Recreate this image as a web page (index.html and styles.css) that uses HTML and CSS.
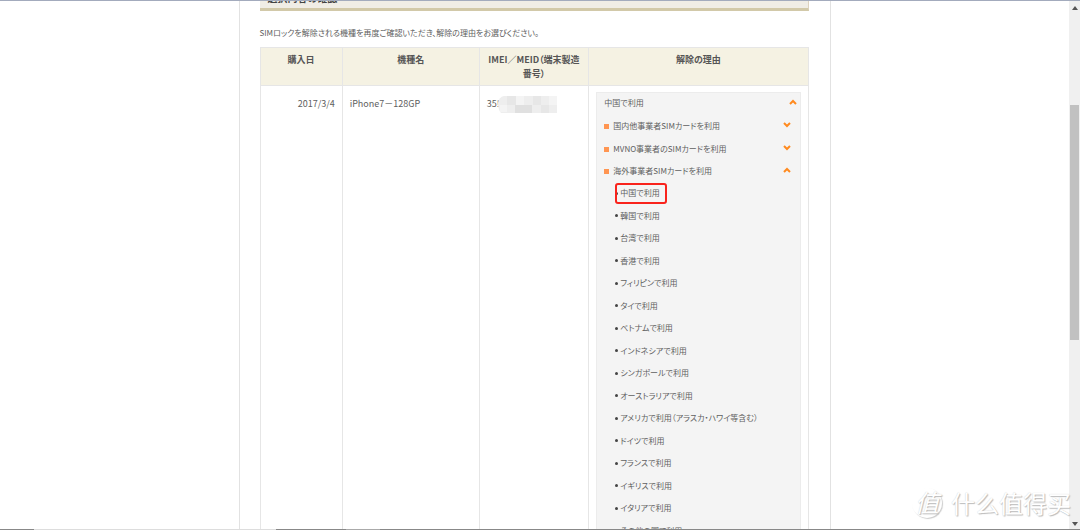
FILE: index.html
```html
<!DOCTYPE html>
<html lang="ja">
<head>
<meta charset="utf-8">
<title>SIMロック解除</title>
<link rel="stylesheet" href="styles.css">
</head>
<body>
<div class="window">
  <main class="viewport">
    <div class="page">
      <h2 class="heading"><span>選択内容の確認</span></h2>
      <p class="lead">SIMロックを解除される機種を再度ご確認いただき、解除の理由をお選びください。</p>
      <table class="devices">
        <colgroup><col class="col-date"><col class="col-model"><col class="col-imei"><col class="col-reason"></colgroup>
        <thead>
          <tr><th>購入日</th><th>機種名</th><th>IMEI／MEID（端末製造番号）</th><th>解除の理由</th></tr>
        </thead>
        <tbody>
          <tr>
            <td class="date">2017/3/4</td>
            <td class="latin">iPhone7－128GP</td>
            <td class="latin"><span class="imei">35!<svg class="mosaic" viewBox="0 0 59 17" aria-hidden="true"><path fill="#eee" d="M6 0H59V17H3Q0 14 0 7Q1 1 6 0Z"/><path fill="#e7e7e7" d="M9 0h9v9H9zM35 0h8v9h-8zM43 9h8v8h-8z"/><path fill="#e0e0e0" d="M17 9h17v8H17z"/><path fill="#f4f4f4" d="M18 0h8v9h-8zM51 0h8v9h-8zM2 9h7v7H2z"/></svg></span></td>
            <td class="reason">
              <div class="picker">
                <button class="row current" type="button">中国で利用<svg class="chev" viewBox="0 0 8 6"><path d="M1 5L4 2L7 5"/></svg></button>
                <ul class="groups">
                  <li><button class="row group" type="button">国内他事業者SIMカードを利用<svg class="chev" viewBox="0 0 8 6"><path d="M1 1L4 4L7 1"/></svg></button></li>
                  <li><button class="row group" type="button">MVNO事業者のSIMカードを利用<svg class="chev" viewBox="0 0 8 6"><path d="M1 1L4 4L7 1"/></svg></button></li>
                  <li><button class="row group" type="button">海外事業者SIMカードを利用<svg class="chev" viewBox="0 0 8 6"><path d="M1 5L4 2L7 5"/></svg></button>
                    <ul class="countries">
                      <li class="marked"><a href="#">中国で利用</a></li>
                      <li><a href="#">韓国で利用</a></li>
                      <li><a href="#">台湾で利用</a></li>
                      <li><a href="#">香港で利用</a></li>
                      <li><a href="#">フィリピンで利用</a></li>
                      <li><a href="#">タイで利用</a></li>
                      <li><a href="#">ベトナムで利用</a></li>
                      <li><a href="#">インドネシアで利用</a></li>
                      <li><a href="#">シンガポールで利用</a></li>
                      <li><a href="#">オーストラリアで利用</a></li>
                      <li><a href="#">アメリカで利用（アラスカ・ハワイ等含む）</a></li>
                      <li><a href="#">ドイツで利用</a></li>
                      <li><a href="#">フランスで利用</a></li>
                      <li><a href="#">イギリスで利用</a></li>
                      <li><a href="#">イタリアで利用</a></li>
                      <li><a href="#">その他の国で利用</a></li>
                    </ul>
                  </li>
                </ul>
              </div>
            </td>
          </tr>
        </tbody>
      </table>
    </div>
  </main>
  <div class="scrollbar" aria-hidden="true">
    <svg class="arrow" viewBox="0 0 6 4"><path d="M0 4L3 0L6 4Z"/></svg>
    <div class="track"><div class="thumb"></div></div>
    <svg class="arrow" viewBox="0 0 6 4"><path d="M0 0L3 4L6 0Z"/></svg>
  </div>
  <div class="watermark" lang="zh-CN"><span class="seal">值</span><span>什么值得买</span></div>
  <div class="taskbar"></div>
</div>
</body>
</html>
```

FILE: styles.css
```css
*, *::before, *::after { box-sizing: border-box; }

body {
  margin: 0;
  background: #fff;
  color: #606060;
  font: 8px/14px "Noto Sans CJK JP", sans-serif;
  font-feature-settings: "palt";
}

ul { list-style: none; margin: 0; padding: 0; }

.window {
  position: relative;
  display: flex;
  height: 100vh;
  overflow: hidden;
  border-top: 1px solid #a3abbd;
}

.viewport { flex: 1; min-width: 0; }

.page {
  max-width: 592px;
  min-height: 100%;
  margin: 0 auto;
  padding: 0 21px 0 20px;
  border: solid #e2e2e2;
  border-width: 0 1px;
}

.heading {
  height: 10px;
  margin: 0 0 15px;
  padding: 0 0 3px 8px;
  display: flex;
  align-items: flex-end;
  overflow: hidden;
  background: #f0ede6;
  border: 1px solid #ddd3c0;
  border-width: 0 1px 3px 0;
  border-bottom-color: #d2c9a9;
  color: #444;
  font-size: 10px;
  line-height: 14px;
}

.lead { margin: 0 0 7px; }

.devices {
  width: 100%;
  table-layout: fixed;
  border-collapse: collapse;
}

.col-date { width: 15%; }
.col-model { width: 25%; }
.col-imei { width: 20%; }

.devices th,
.devices td {
  border: 1px solid #e6e6e6;
  vertical-align: top;
}

.devices th {
  padding: 5px 7px 4px;
  background: #f5f2e3;
  color: #555;
  font-size: 9px;
}

.devices td { padding: 11px 7px 7px; }
.devices td.reason { padding: 6px 7px 0; }
.devices .latin { font-size: 9px; }
.devices .date { font-size: 9px; text-align: right; }

.imei { display: flex; align-items: center; height: 14px; }
.mosaic { width: 59px; height: 17px; flex: none; margin-left: -2px; }

.picker {
  padding: 0 3px 0 7px;
  background: #f4f4f4;
  border: 1px solid #ececec;
}

.row {
  display: flex;
  align-items: center;
  width: 100%;
  height: 22px;
  padding: 0;
  border: 0;
  background: none;
  color: inherit;
  font: inherit;
  font-feature-settings: inherit;
  text-align: left;
}

.current { height: 20px; }

.chev {
  width: 8px;
  height: 6px;
  margin: 0 0 2px auto;
  fill: none;
  stroke: #ff8a1f;
  stroke-width: 2;
}

.groups { padding: 2px 6px 0 0; }
.groups > li:first-child { padding-bottom: 1px; }

.group::before {
  content: "";
  width: 5px;
  height: 5px;
  margin-right: 4px;
  background: #ff9551;
}

.countries { padding-left: 11px; }

.countries li {
  display: flex;
  align-items: center;
  height: 22px;
}

.countries li:nth-child(even) { height: 23px; }

.countries li::before {
  content: "";
  width: 3px;
  height: 3px;
  margin-right: 2px;
  border-radius: 50%;
  background: #444;
}

.countries a { color: inherit; text-decoration: none; }

.countries .marked { position: relative; }

.countries .marked::after {
  content: "";
  position: absolute;
  left: 0;
  top: 1px;
  width: 52px;
  height: 21px;
  border: 2px solid #f9231c;
  border-radius: 3px;
}

.scrollbar {
  display: flex;
  flex-direction: column;
  align-items: center;
  width: 11px;
  padding: 5px 0 4px;
  background: #f0f0f0;
}

.arrow { width: 6px; height: 4px; fill: #555; }

.track { flex: 1; width: 9px; padding-top: 95px; }
.thumb { height: 46%; min-height: 235px; background: #c1c1c1; }

.watermark {
  position: absolute;
  right: 9px;
  bottom: 12px;
  display: flex;
  align-items: center;
  gap: 9px;
  color: #fff;
  font: 24px/30px "Noto Sans CJK SC", sans-serif;
  text-shadow: 1px 1px 1px #bbb, 0 0 1px #ccc;
}

.seal {
  width: 30px;
  height: 30px;
  border-radius: 50%;
  box-shadow: 1px 1px 1px #ccc;
  font-size: 24px;
  font-style: italic;
  line-height: 28px;
  text-align: center;
}

.taskbar {
  position: absolute;
  left: 0;
  right: 0;
  bottom: 0;
  height: 1px;
  background: linear-gradient(90deg, #888 34px, #ddd 34px 276px, #888 276px 346px, #aaa 346px 380px, #888 380px);
}
```
